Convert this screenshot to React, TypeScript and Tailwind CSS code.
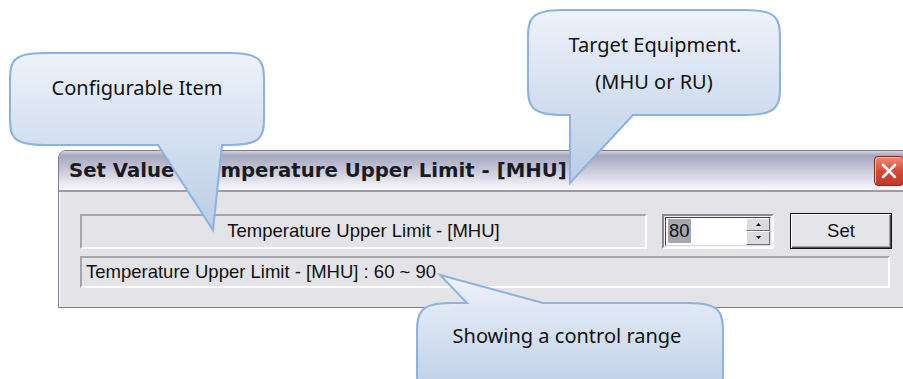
import React from 'react'

const sans = { fontFamily: '"Liberation Sans", Arial, sans-serif' }

function Bubbles() {
  return (
    <svg className="absolute left-0 top-0" width={903} height={379} viewBox="0 0 903 379">
      <defs>
        <linearGradient id="g1" x1="0" y1="0" x2="0" y2="1">
          <stop offset="0" stopColor="#eef2fa" />
          <stop offset="1" stopColor="#b9cde6" />
        </linearGradient>
      </defs>
      {/* configurable item */}
      <path
        d="M44 53 H230 C262 53 264 62 264 80 V118 C264 136 262 145 230 145 H222 L213 230 L158 145 H44 C12 145 10 136 10 118 V80 C10 62 12 53 44 53 Z"
        fill="url(#g1)" stroke="#8db2df" strokeWidth={2}
      />
      {/* target equipment */}
      <path
        d="M562 10 H746 C778 10 780 20 780 38 V87 C780 105 778 115 746 115 H633 L570 183 V115 H562 C530 115 528 105 528 87 V38 C528 20 530 10 562 10 Z"
        fill="url(#g1)" stroke="#8db2df" strokeWidth={2}
      />
      {/* control range */}
      <path
        d="M451 303 H467 L440 275 L543 303 H689 C721 303 723 313 723 333 V372 C723 392 721 402 689 402 H451 C419 402 417 392 417 372 V333 C417 313 419 303 451 303 Z"
        fill="url(#g1)" stroke="#8db2df" strokeWidth={2}
      />
      <g fontFamily='"Noto Sans", "Open Sans", sans-serif' fontSize={20} fill="#111" textAnchor="middle">
        <text x={137} y={95}>Configurable Item</text>
        <text x={655} y={52}>Target Equipment.</text>
        <text x={654} y={89}>(MHU or RU)</text>
        <text x={567} y={343}>Showing a control range</text>
      </g>
    </svg>
  )
}

function SpinBox() {
  return (
    <div className="flex h-[35px] w-[112px] border-2 border-t-[#8a8a8e] border-l-[#8a8a8e] border-b-white border-r-white bg-[#f4f4f6] p-[1px]">
      <div className="flex flex-1 border border-t-[#404044] border-l-[#404044] border-b-[#d8d8dc] border-r-[#d8d8dc] bg-white">
        <div className="flex flex-1 items-center pl-[2px]">
          <span className="bg-[#a6a6ae] px-[1px] text-[18.5px] leading-[24px] text-[#111]" style={sans}>80</span>
        </div>
        <div className="flex w-[24px] flex-col">
          <div className="flex flex-1 items-center justify-center border border-t-white border-l-white border-b-[#707074] border-r-[#707074] bg-[#dcdce0]">
            <svg width="5" height="3" viewBox="0 0 5 3"><path d="M2.5 0 L5 3 H0 Z" fill="#111" /></svg>
          </div>
          <div className="flex flex-1 items-center justify-center border border-t-white border-l-white border-b-[#707074] border-r-[#707074] bg-[#dcdce0]">
            <svg width="5" height="3" viewBox="0 0 5 3"><path d="M0 0 H5 L2.5 3 Z" fill="#111" /></svg>
          </div>
        </div>
      </div>
    </div>
  )
}

export default function App() {
  return (
    <div className="relative h-[379px] w-[903px] overflow-hidden bg-white">
      <div className="ml-[58px] mt-[150px] w-[860px] rounded-t-[8px] border border-[#7e7e88] bg-[#e3e3e8] shadow-[inset_1px_1px_0_#ffffff]">
        {/* title bar */}
        <div className="flex h-[41px] items-center justify-between rounded-t-[7px] border-b-2 border-[#9a9aa8] bg-[linear-gradient(to_bottom,#d4d4de_0%,#a6a6be_12%,#c4c4d6_45%,#ececf3_85%,#f8f8fb_100%)] pl-[10px] pr-[13px]">
          <span className="text-[19.7px] font-bold text-[#1a1a22]" style={{ fontFamily: '"DejaVu Sans", Verdana, sans-serif' }}>
            Set Value - Temperature Upper Limit - [MHU]
          </span>
          <div className="flex h-[30px] w-[30px] items-center justify-center rounded-[4px] border border-[#8a2a20] bg-[linear-gradient(to_bottom,#f08a78,#d44a38_50%,#c03828)] shadow-[inset_1px_1px_0_#ffb8a8]">
            <svg width="18" height="18" viewBox="0 0 18 18">
              <path d="M3 3 L15 15 M15 3 L3 15" stroke="#fff" strokeWidth={2.6} strokeLinecap="round" />
            </svg>
          </div>
        </div>
        {/* body */}
        <div className="flex flex-col gap-[7px] px-[21px] pb-[19px] pt-[21px]">
          <div className="flex items-center">
            <div className="flex h-[35px] w-[567px] items-center justify-center border-2 border-t-[#a4a4aa] border-l-[#a4a4aa] border-b-white border-r-white">
              <span className="text-[18.5px] text-[#111]" style={sans}>Temperature Upper Limit - [MHU]</span>
            </div>
            <div className="ml-[15px]">
              <SpinBox />
            </div>
            <button className="ml-[16px] flex h-[36px] w-[102px] items-center justify-center border border-[#111] bg-[#e6e6ea] shadow-[inset_1px_1px_0_#ffffff,inset_-1px_-1px_0_#505056,inset_-2px_-2px_0_#a0a0a8]">
              <span className="text-[18.5px] text-[#111]" style={sans}>Set</span>
            </button>
          </div>
          <div className="flex h-[32px] w-[810px] items-center border-2 border-t-[#a4a4aa] border-l-[#a4a4aa] border-b-white border-r-white pl-[4px]">
            <span className="text-[18.5px] text-[#111]" style={sans}>Temperature Upper Limit - [MHU] : 60 ~ 90</span>
          </div>
        </div>
      </div>
      <Bubbles />
    </div>
  )
}
